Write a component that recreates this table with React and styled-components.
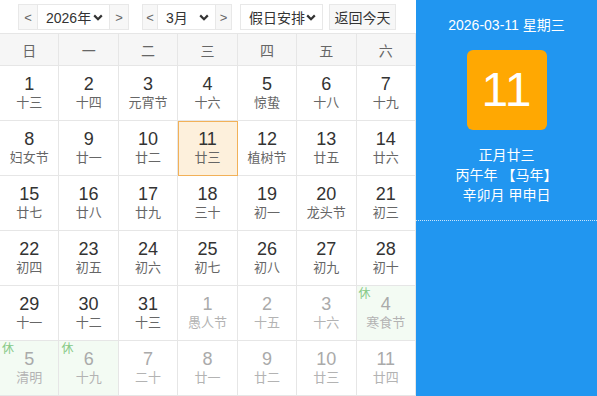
import React from "react";
import styled, { createGlobalStyle } from "styled-components";

const GlobalStyle = createGlobalStyle`
  html, body {
    margin: 0;
    padding: 0;
    background: #fff;
    font-family: "Liberation Sans", "Noto Sans CJK SC", sans-serif;
  }
`;

// Layout
const Page = styled.div`
  display: flex;
  width: 597px;
  height: 396px;
  overflow: hidden;
`;

const CalendarPane = styled.div`
  width: 416px;
  flex-shrink: 0;
`;

const Toolbar = styled.div`
  display: flex;
  align-items: flex-start;
  height: 33px;
  box-sizing: border-box;
  padding: 4px 0 0 18px;
`;

const Group = styled.div`
  display: flex;
  height: 26px;
  margin-left: ${({ gap }) => gap || 0}px;
`;

const ArrowButton = styled.div`
  width: ${({ w }) => w}px;
  height: 26px;
  box-sizing: border-box;
  display: flex;
  align-items: center;
  justify-content: center;
  background: #f7f7f7;
  border: 1px solid #e8e8e8;
  color: #666;
  font-size: 13px;
  ${({ side }) => (side === "left" ? "border-right: none;" : "border-left: none;")}
`;

const Select = styled.div`
  width: ${({ w }) => w}px;
  height: 26px;
  box-sizing: border-box;
  display: flex;
  align-items: center;
  justify-content: space-between;
  padding: 0 6px 0 ${({ pl }) => pl || 8}px;
  background: #fff;
  border: 1px solid #e8e8e8;
  color: #333;
  font-size: 14px;
  white-space: nowrap;
  margin-left: ${({ gap }) => gap || 0}px;

  svg {
    flex-shrink: 0;
  }
`;

const PlainButton = styled.div`
  width: 67px;
  height: 26px;
  box-sizing: border-box;
  display: flex;
  align-items: center;
  justify-content: center;
  background: #f7f7f7;
  border: 1px solid #e8e8e8;
  color: #333;
  font-size: 14px;
  white-space: nowrap;
  margin-left: 6px;
`;

const Grid = styled.div`
  display: grid;
  grid-template-columns: repeat(7, 1fr);
  border-top: 1px solid #e6e6e6;
`;

const HeadCell = styled.div`
  height: 31px;
  display: flex;
  align-items: center;
  justify-content: center;
  background: #f6f6f6;
  color: #666;
  font-size: 14px;
  border-right: 1px solid #e6e6e6;
  border-bottom: 1px solid #e6e6e6;
`;

const DayCell = styled.div`
  position: relative;
  height: 55px;
  box-sizing: border-box;
  padding-top: 8px;
  text-align: center;
  border-right: 1px solid #e6e6e6;
  border-bottom: 1px solid #e6e6e6;
  background: ${({ today, rest }) => (today ? "#fdf0dc" : rest ? "#f3fbf3" : "#fff")};
  outline: ${({ today }) => (today ? "1px solid #f2b158" : "none")};
  outline-offset: -1px;
`;

const DayNum = styled.div`
  font-size: 18px;
  line-height: 20px;
  color: ${({ other }) => (other ? "#aaa" : "#333")};
`;

const Lunar = styled.div`
  font-size: 13px;
  line-height: 18px;
  color: ${({ other }) => (other ? "#b3b3b3" : "#666")};
`;

const RestBadge = styled.span`
  position: absolute;
  left: 2px;
  top: 1px;
  font-size: 12px;
  line-height: 15px;
  color: #86c986;
`;

// Side panel
const SidePanel = styled.div`
  flex: 1;
  background: #2196f0;
  color: #fff;
`;

const DayInfo = styled.div`
  display: flex;
  flex-direction: column;
  align-items: center;
  padding: 15px 0 15px;
  border-bottom: 1px dotted rgba(255, 255, 255, 0.75);
`;

const DateLine = styled.div`
  font-size: 14px;
  line-height: 20px;
`;

const BigDay = styled.div`
  margin-top: 15px;
  width: 80px;
  height: 80px;
  border-radius: 6px;
  background: #ffa802;
  display: flex;
  align-items: center;
  justify-content: center;
  font-size: 48px;
  line-height: 1;
`;

const LunarInfo = styled.div`
  margin-top: 15px;
  font-size: 14px;
  line-height: 20px;
  text-align: center;
`;

const Chevron = () => (
  <svg width="10" height="7" viewBox="0 0 10 7">
    <polyline points="1.2,1.4 5,5.2 8.8,1.4" fill="none" stroke="#333" strokeWidth="2.2" />
  </svg>
);

const weekDays = ["日", "一", "二", "三", "四", "五", "六"];

const days = [
  [1, "十三"], [2, "十四"], [3, "元宵节"], [4, "十六"], [5, "惊蛰"], [6, "十八"], [7, "十九"],
  [8, "妇女节"], [9, "廿一"], [10, "廿二"], [11, "廿三", { today: true }], [12, "植树节"], [13, "廿五"], [14, "廿六"],
  [15, "廿七"], [16, "廿八"], [17, "廿九"], [18, "三十"], [19, "初一"], [20, "龙头节"], [21, "初三"],
  [22, "初四"], [23, "初五"], [24, "初六"], [25, "初七"], [26, "初八"], [27, "初九"], [28, "初十"],
  [29, "十一"], [30, "十二"], [31, "十三"], [1, "愚人节", { other: true }], [2, "十五", { other: true }], [3, "十六", { other: true }], [4, "寒食节", { other: true, rest: true }],
  [5, "清明", { other: true, rest: true }], [6, "十九", { other: true, rest: true }], [7, "二十", { other: true }], [8, "廿一", { other: true }], [9, "廿二", { other: true }], [10, "廿三", { other: true }], [11, "廿四", { other: true }],
];

const App = () => {
  return (
    <>
      <GlobalStyle />
      <Page>
        <CalendarPane>
          <Toolbar>
            <Group>
              <ArrowButton w={19} side="left">&lt;</ArrowButton>
              <Select w={73}>
                <span>2026年</span>
                <Chevron />
              </Select>
              <ArrowButton w={19} side="right">&gt;</ArrowButton>
            </Group>
            <Group gap={13}>
              <ArrowButton w={15} side="left">&lt;</ArrowButton>
              <Select w={59} pl={8}>
                <span>3月</span>
                <Chevron />
              </Select>
              <ArrowButton w={16} side="right">&gt;</ArrowButton>
            </Group>
            <Select w={83} gap={8}>
              <span>假日安排</span>
              <Chevron />
            </Select>
            <PlainButton>返回今天</PlainButton>
          </Toolbar>

          <Grid>
            {weekDays.map((d) => (
              <HeadCell key={d}>{d}</HeadCell>
            ))}
            {days.map(([num, lunar, flags = {}], i) => (
              <DayCell key={i} today={flags.today} rest={flags.rest}>
                {flags.rest && <RestBadge>休</RestBadge>}
                <DayNum other={flags.other}>{num}</DayNum>
                <Lunar other={flags.other}>{lunar}</Lunar>
              </DayCell>
            ))}
          </Grid>
        </CalendarPane>

        {/* Sidebar */}
        <SidePanel>
          <DayInfo>
            <DateLine>2026-03-11 星期三</DateLine>
            <BigDay>11</BigDay>
            <LunarInfo>
              <div>正月廿三</div>
              <div>丙午年 【马年】</div>
              <div>辛卯月 甲申日</div>
            </LunarInfo>
          </DayInfo>
        </SidePanel>
      </Page>
    </>
  );
};

export default App;
